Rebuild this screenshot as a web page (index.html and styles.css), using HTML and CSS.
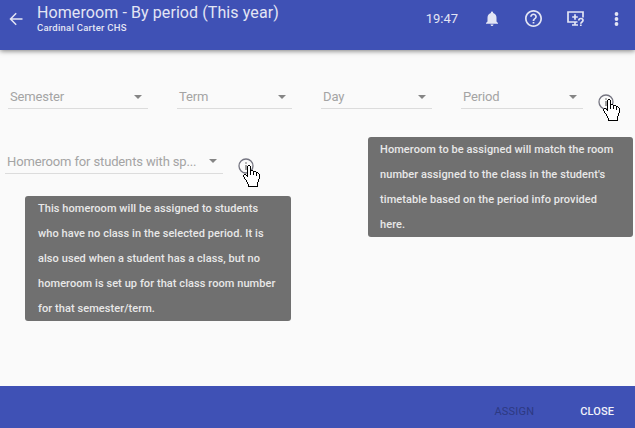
FILE: index.html
```html
<!DOCTYPE html>
<html lang="en">
<head>
<meta charset="utf-8">
<title>Homeroom - By period</title>
<link rel="stylesheet" href="styles.css">
</head>
<body>
<svg width="0" height="0" class="defs" aria-hidden="true">
  <symbol id="hand" viewBox="0 0 17 22">
    <path d="M5.5.5h1l1 1v4h2l1 1h2l1 1h1l2 2v4l-1 1v2l-1 1v4h-9v-2l-1-1v-1l-1-1v-1l-2-2v-1l-1-1v-1l1-1h1l2 2v-10zM7.500 5.500v4M10.500 6.500v3M13.500 7.500v3" fill="#fff" stroke="#000" stroke-width="1.300" shape-rendering="crispEdges"/>
  </symbol>
  <symbol id="info" viewBox="0 0 16 16">
    <circle cx="8" cy="8" r="7" fill="none" stroke="#747480" stroke-width="1.300"/>
    <path d="M8 4.300v1.500M8 7v5" stroke="#777" stroke-width="1.400"/>
  </symbol>
</svg>
<div class="page">
  <header class="bar">
    <svg class="back" viewBox="0 0 14 14"><path d="M13.500 7H2M7.200 1.300 1.500 7l5.700 5.700" fill="none" stroke="currentColor" stroke-width="1.500"/></svg>
    <div class="titles">
      <h1>Homeroom - By period (This year)</h1>
      <p>Cardinal Carter CHS</p>
    </div>
    <div class="tools">
      <span class="clock">19:47</span>
      <svg class="bell" viewBox="4 2 16 20"><path fill="currentColor" d="M12 22c1.100 0 2-.9 2-2h-4c0 1.100.9 2 2 2zm6-6v-5c0-3.070-1.640-5.640-4.500-6.320V4a1.500 1.500 0 0 0-3 0v.68C7.630 5.360 6 7.920 6 11v5l-2 2v1h16v-1z"/></svg>
      <svg class="help" viewBox="2 2 20 20"><path fill="currentColor" d="M11 18h2v-2h-2v2zm1-16C6.480 2 2 6.480 2 12s4.480 10 10 10 10-4.480 10-10S17.520 2 12 2zm0 18c-4.410 0-8-3.590-8-8s3.590-8 8-8 8 3.590 8 8-3.590 8-8 8zm0-14c-2.210 0-4 1.790-4 4h2c0-1.100.9-2 2-2s2 .9 2 2c0 2-3 1.750-3 5h2c0-2.250 3-2.500 3-5 0-2.210-1.790-4-4-4z"/></svg>
      <svg class="remote" viewBox="0 0 17 15" fill="none" stroke="currentColor" stroke-width="1.700"><path d="M10.500 11H1V1h15v5.500M5 14h6M8 11v3M8 3.200v5.600M5.200 6h5.600"/><path d="M11.800 9.500c0-2.700 4.200-2.700 4.200 0 0 1.500-2.200 1.500-2.200 3.300M13.800 13.500V15"/></svg>
      <svg class="more" viewBox="0 0 5 14" fill="currentColor"><circle cx="2.500" cy="2" r="1.900"/><circle cx="2.500" cy="7" r="1.900"/><circle cx="2.500" cy="12" r="1.900"/></svg>
    </div>
  </header>
  <main>
    <div class="row periods">
      <div class="select"><span>Semester</span><i></i></div>
      <div class="select"><span>Term</span><i></i></div>
      <div class="select"><span>Day</span><i></i></div>
      <div class="select"><span>Period</span><i></i></div>
      <div class="hint">
        <svg class="info"><use href="#info"/></svg>
        <svg class="hand"><use href="#hand"/></svg>
        <div class="tip tip-period">Homeroom to be assigned will match the room<br>number assigned to the class in the student's<br>timetable based on the period info provided<br>here.</div>
      </div>
    </div>
    <div class="row spare">
      <div class="select"><span>Homeroom for students with sp...</span><i></i></div>
      <div class="hint">
        <svg class="info"><use href="#info"/></svg>
        <svg class="hand"><use href="#hand"/></svg>
        <div class="tip tip-spare">This homeroom will be assigned to students<br>who have no class in the selected period. It is<br>also used when a student has a class, but no<br>homeroom is set up for that class room number<br>for that semester/term.</div>
      </div>
    </div>
  </main>
  <footer>
    <span class="assign">ASSIGN</span>
    <span class="close">CLOSE</span>
  </footer>
</div>
</body>
</html>
```
FILE: styles.css
```css
* { box-sizing: border-box; }
body { margin: 0; font-family: Roboto, sans-serif; background: #fafafa; }
.defs { position: absolute; }
svg { display: block; flex: none; }
.page { height: 428px; display: flex; flex-direction: column; overflow: hidden; }
.bar {
  height: 50px; flex: none; display: flex; align-items: flex-start;
  padding: 0 16px 0 9px; background: #3f51b5; color: #e3e5f4;
  box-shadow: 0 1px 5px rgba(0,0,0,.5);
}
.back { width: 14px; height: 14px; margin-top: 12px; }
.titles { margin-left: 14px; padding-top: 4px; white-space: nowrap; }
h1 { margin: 0; font-size: 16px; line-height: 18px; font-weight: 400; letter-spacing: .09px; }
.titles p { margin: 0; font-size: 9.500px; line-height: 11px; font-weight: 500; letter-spacing: .24px; }
.tools { margin-left: auto; height: 37px; display: flex; align-items: center; }
.clock { font-size: 13px; margin-right: 27px; }
.bell { width: 14px; height: 15px; margin-right: 26px; }
.help { width: 17px; height: 17px; margin-right: 25px; }
.remote { width: 17px; height: 15px; margin-right: 30px; }
.more { width: 5px; height: 14px; }
main { flex: 1; padding: 36px 0 0 5px; }
.row { display: flex; }
.select {
  height: 23px; display: flex; justify-content: space-between;
  padding: 0 6px 0 2px; border-bottom: 1px solid #dcdcdc;
  color: #a4a4a4; font-size: 13px; line-height: 21px; letter-spacing: -.14px; white-space: nowrap;
}
.select i { margin-top: 9px; width: 8px; height: 4px; background: #858585; clip-path: polygon(0 0, 100% 0, 50% 100%); }
.periods { display: grid; grid-template-columns: 140px 115px 111px 122px 16px; column-gap: 29px; margin-left: 3px; }
.periods .hint { margin-left: -14px; }
.spare { margin-top: 41px; }
.spare .select { width: 218px; height: 24px; }
.spare .select i { margin-top: 9px; }
.spare .select span { line-height: 23px; }
.spare .hint { margin-left: 15px; }
.hint { position: relative; width: 16px; height: 15px; margin-top: 8px; }
.info { width: 16px; height: 16px; margin: -.5px 0 0 -.5px; }
.hand { position: absolute; left: 5px; top: 5px; width: 17px; height: 22px; }
.spare .hand { top: 7px; }
.tip {
  position: absolute; background: #707070; color: #e8e8e8; border-radius: 3px;
  font-size: 11px; font-weight: 500; line-height: 25px; letter-spacing: .07px; padding: 0 13px; white-space: nowrap;
}
.tip-period { left: -230px; top: 43px; width: 265px; height: 100px; padding-left: 12px; letter-spacing: .08px; }
.tip-spare { left: -213px; top: 38px; width: 266px; height: 125px; }
footer {
  height: 42px; flex: none; display: flex; align-items: center; justify-content: flex-end;
  padding: 8px 21px 0 0; background: #3f51b5; font-size: 11px; gap: 46px;
}
.assign { color: #2d3982; letter-spacing: .2px; }
.close { color: #f1f2fa; font-weight: 500; letter-spacing: .1px; }
```
